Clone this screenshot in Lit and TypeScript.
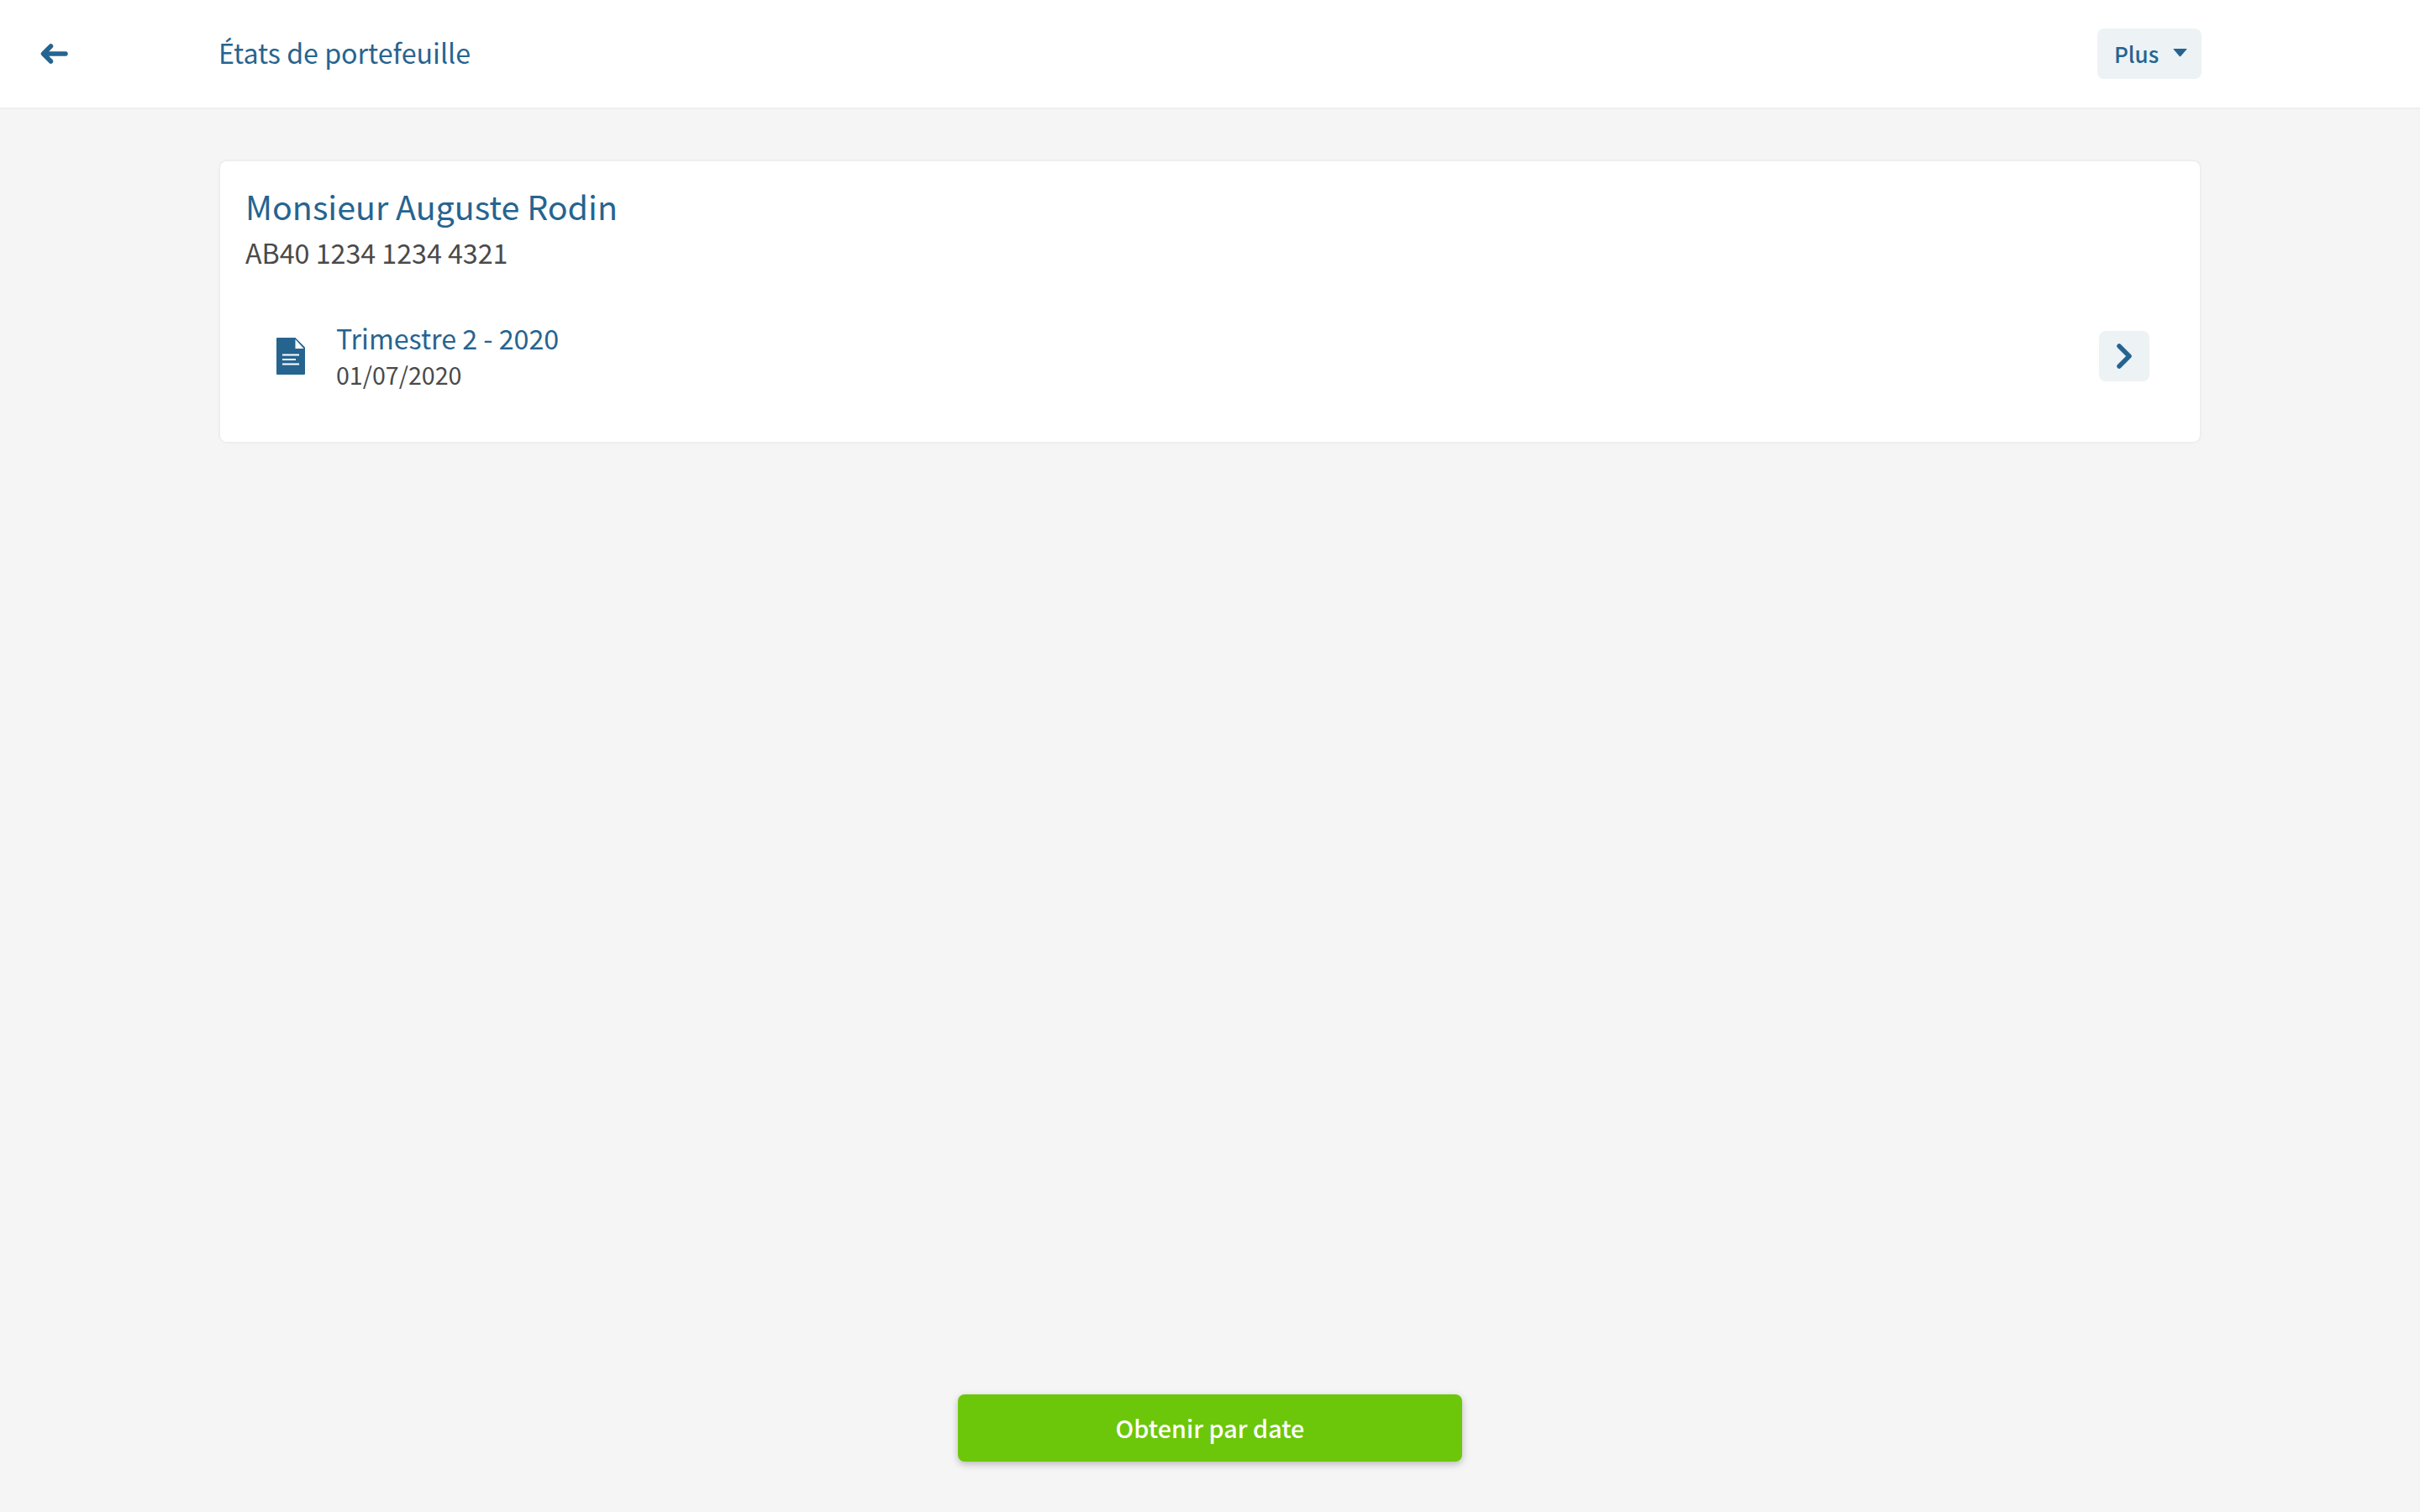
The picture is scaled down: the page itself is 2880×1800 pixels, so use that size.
import { LitElement, html, css } from "lit";
import { customElement } from "lit/decorators.js";

@customElement("app-root")
export class AppRoot extends LitElement {
  static styles = css`
    :host {
      display: flex;
      flex-direction: column;
      height: 1800px;
      background: #f5f5f5;
      font-family: "Noto Sans CJK JP", "Noto Sans", sans-serif;
      color: #4a4a4a;
    }
    header {
      display: flex;
      align-items: center;
      height: 130px;
      box-sizing: border-box;
      flex: none;
      background: #fff;
      border-bottom: 2px solid #eeeeee;
      padding-right: 260px;
    }
    .back {
      width: 260px;
      flex: none;
      padding-left: 47px;
      box-sizing: border-box;
      display: flex;
      align-items: center;
    }
    .title {
      flex: 1;
      font-size: 32.2px;
      padding-bottom: 4px;
      color: #266490;
    }
    .plus {
      display: flex;
      align-items: center;
      justify-content: space-between;
      box-sizing: border-box;
      width: 124px;
      height: 60px;
      padding: 0 17px 2px 20px;
      background: #edf2f5;
      border-radius: 8px;
      font-size: 26px;
      font-weight: 500;
      color: #266490;
    }
    main {
      flex: 1;
      padding: 60px 260px 0;
    }
    .card {
      background: #fff;
      border-radius: 10px;
      border: 2px solid #eeeeee;
      padding: 27px 60px 0 30px;
      height: 338px;
      box-sizing: border-box;
    }
    h1 {
      margin: 0;
      font-size: 39.4px;
      font-weight: 400;
      line-height: 52px;
      color: #266490;
    }
    .code {
      margin-top: 7px;
      font-size: 32.2px;
      line-height: 44px;
    }
    .row {
      display: flex;
      align-items: center;
      height: 86px;
      margin-top: 59px;
      padding-left: 37px;
    }
    .doc {
      flex: none;
      margin-right: 37px;
    }
    .info {
      flex: 1;
      align-self: flex-start;
    }
    .name {
      font-size: 32.2px;
      line-height: 42px;
      color: #266490;
    }
    .date {
      font-size: 28.6px;
      line-height: 46px;
    }
    .go {
      flex: none;
      width: 60px;
      height: 60px;
      border-radius: 8px;
      background: #edf2f5;
      display: flex;
      align-items: center;
      justify-content: center;
    }
    footer {
      flex: none;
      display: flex;
      justify-content: center;
      padding-bottom: 60px;
    }
    .cta {
      width: 600px;
      height: 80px;
      box-sizing: border-box;
      padding-bottom: 2px;
      display: flex;
      align-items: center;
      justify-content: center;
      background: #6cc70a;
      border-radius: 8px;
      box-shadow: 0 3px 8px rgba(0, 0, 0, 0.25);
      color: #fff;
      font-size: 28.8px;
      font-weight: 500;
    }
    svg { display: block; }
  `;

  render() {
    return html`
      <header>
        <div class="back">
          <svg width="34" height="24" viewBox="0 0 34 24" fill="none" stroke="#266490" stroke-width="5.5" stroke-linecap="round" stroke-linejoin="round">
            <path d="M31 12H5M13.5 3L4.5 12L13.5 21" />
          </svg>
        </div>
        <div class="title">États de portefeuille</div>
        <div class="plus">
          <span>Plus</span>
          <svg width="17" height="9.5" viewBox="0 0 16 9"><path d="M1 0H15Q16 0 15.4 .8L8.7 8.5Q8 9 7.3 8.5L.6 .8Q0 0 1 0Z" fill="#266490" /></svg>
        </div>
      </header>
      <main>
        <section class="card">
          <h1>Monsieur Auguste Rodin</h1>
          <div class="code">AB40 1234 1234 4321</div>
          <div class="row">
            <svg class="doc" width="34" height="44" viewBox="0 0 34 44">
              <path fill="#266490" d="M1 0H22.5L34 11.5V43Q34 44 33 44H1Q0 44 0 43V1Q0 0 1 0Z" />
              <path fill="#fff" d="M22.5 2V13H32.5Z" />
              <path stroke="#fff" stroke-width="1.8" d="M7 20.5H27M7 26H23M7 31.5H27" />
            </svg>
            <div class="info">
              <div class="name">Trimestre 2 - 2020</div>
              <div class="date">01/07/2020</div>
            </div>
            <div class="go">
              <svg width="18" height="30" viewBox="0 0 18 30" fill="none" stroke="#266490" stroke-width="5.5" stroke-linecap="round" stroke-linejoin="round">
                <path d="M3 3L15 15L3 27" />
              </svg>
            </div>
          </div>
        </section>
      </main>
      <footer><div class="cta">Obtenir par date</div></footer>
    `;
  }
}
